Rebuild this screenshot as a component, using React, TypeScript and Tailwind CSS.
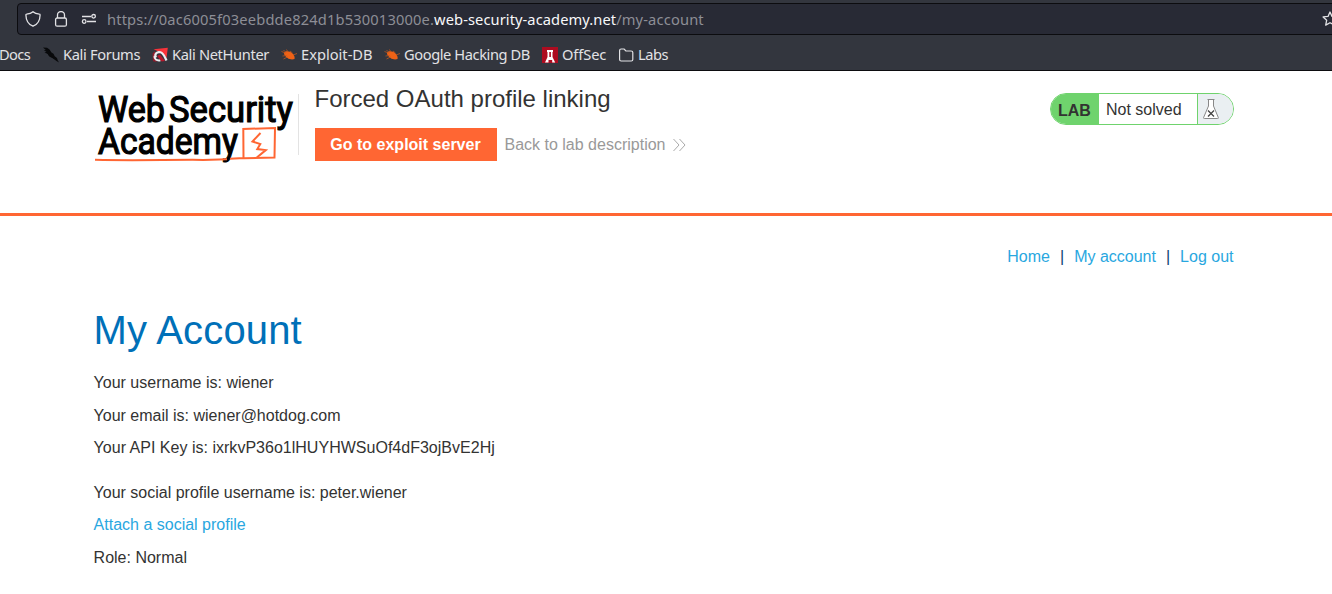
import type { ReactNode } from "react";

function KaliIcon() {
  return (
    <svg width="16" height="16" viewBox="0 0 16 16" fill="#08090b">
      <path d="M0 .5l4 .3 2.500 1.800L8.500 5.500l2 1.300 1.200 2.400 2.300 1.800.7 2.200L16 15.500l-2.500-1.500-2.800-2L8.500 10.500 6 9 4.800 6.800 1.500 5.800l2-1.100L.8 3.500l2-.6z" />
      <path d="M3 5l4 5 2 .5L7 5z" />
    </svg>
  );
}

function HunterIcon() {
  return (
    <svg width="16" height="16" viewBox="0 0 16 16">
      <path d="M1.500 2.200L15.800.8 14.500 11 9 5.500z" fill="#f8333a" />
      <path d="M.5 6.500L3 4v4l-1 3 3 4-4-.8z" fill="#8f1b2b" />
      <path d="M4 10.500C2 7 5 4.300 8.500 5.300c3 .8 4 4 6 8.200" fill="none" stroke="#ededf0" strokeWidth="2.200" />
      <path d="M2.500 9c-.5 3 2 5 6 4.300" fill="none" stroke="#ededf0" strokeWidth="2" />
      <path d="M5 9l3-1.500 5 6.500-3.500.5z" fill="#b5172b" />
    </svg>
  );
}

function BugIcon() {
  return (
    <svg width="16" height="16" viewBox="0 0 16 16">
      <path d="M3 5.500c2-2 6-1.500 8.500 1 1.800 1.500 2.500 4 2 5.500-2 .8-5 .5-7-1C4.500 9.500 2.500 7.500 3 5.500z" fill="#ef6216" />
      <path d="M.5 4.500l4 1.500M1.500 9l4-.5M2.500 12l4-2M7 5L5.500 2.500M12 8l4-1.500M2.500 3l2.500 2.500M9 4l2.500 2" fill="none" stroke="#b95520" strokeWidth=".8" />
    </svg>
  );
}

function OffSecIcon() {
  return (
    <svg width="16" height="16" viewBox="0 0 16 16">
      <path d="M0 0h16v16H0z" fill="#ad0c20" />
      <path d="M5 3h6v2h-.5v5l2.700 5.500h-3V13H6.500v2.500H3L5.500 10V5H5z" fill="#fff" />
      <path d="M7.300 5h1.600v5H7.300z" fill="#ad0c20" />
    </svg>
  );
}

function FolderIcon() {
  return (
    <svg width="16" height="16" viewBox="0 0 16 16" fill="none" stroke="#e2e2e5" strokeWidth="1.200">
      <path d="M1.600 3.500q0-1.500 1.500-1.500h3l1.800 2h5.200q1.700 0 1.700 1.500v7q0 1.500-1.500 1.500H3.100q-1.500 0-1.500-1.500z" />
    </svg>
  );
}

function Bookmark({ icon, label, width }: { icon: ReactNode; label: string; width: string }) {
  return (
    <div className={`flex h-5 shrink-0 items-center gap-1 ${width}`}>
      {icon}
      <span className="-mt-0.5 whitespace-nowrap">{label}</span>
    </div>
  );
}

function BrowserChrome() {
  return (
    <div className="h-[71px] overflow-hidden border-b border-[#0c0c0f] bg-[#33363e] font-['Noto_Sans',sans-serif] text-[14.67px] leading-5 text-[#e2e2e5]">
      <div className="flex h-[35px] pt-[3px] pl-[17px]">
        <div className="flex h-8 w-[1320px] shrink-0 items-center rounded-[4px] border border-[#0c0c0f] bg-[#282a35] pl-[7px]">
          <svg className="shrink-0" width="16" height="16" viewBox="0 0 16 16" fill="none" stroke="#e2e2e5" strokeWidth="1.300">
            <path d="M8 .8C6.500 2.200 4 3 1.600 3.200c-.5 0-.7.300-.7.700C1 9 3 13.200 8 15.200c5-2 7-6.200 7.100-11.300 0-.4-.2-.7-.7-.7C12 3 9.500 2.200 8 .8z" />
          </svg>
          <svg className="ml-3 shrink-0" width="16" height="16" viewBox="0 0 16 16" fill="none" stroke="#e2e2e5" strokeWidth="1.300">
            <rect x="2.600" y="7" width="10.800" height="8.200" rx="1.500" />
            <path d="M4.500 7V4a3.500 3.500 0 0 1 7 0v3" />
          </svg>
          <svg className="ml-3 shrink-0" width="16" height="16" viewBox="0 0 16 16" fill="none" stroke="#e2e2e5" strokeWidth="1.300">
            <path d="M1 5.500h9M6 10.500h9" />
            <circle cx="12.600" cy="5.300" r="1.800" />
            <circle cx="3.200" cy="10.500" r="1.800" />
          </svg>
          <div className="ml-[10px] w-[1215px] shrink-0 whitespace-nowrap tracking-[0.16px] text-[#8d8e96]">
            https://0ac6005f03eebdde824d1b530013000e.
            <span className="tracking-[0.08px] text-[#f8f8fa]">web-security-academy.net</span>/my-account
          </div>
          <svg className="shrink-0" width="16" height="16" viewBox="0 0 16 16" fill="none" stroke="#e2e2e5" strokeWidth="1.300" strokeLinejoin="round">
            <path d="M8 1l2 4.400 4.900.5-3.600 3.300 1 4.900L8 11.700l-4.300 2.400 1-4.900L1.100 5.900 6 5.400z" />
          </svg>
        </div>
      </div>
      <div className="flex h-9 items-center pt-1">
        <div className="-mt-0.5 w-[43px] shrink-0 -indent-px tracking-[-0.6px]">Docs</div>
        <Bookmark icon={<KaliIcon />} label="Kali Forums" width="w-[109px] tracking-[-0.35px]" />
        <Bookmark icon={<HunterIcon />} label="Kali NetHunter" width="w-[129px] tracking-[-0.35px]" />
        <Bookmark icon={<BugIcon />} label="Exploit-DB" width="w-[103px]" />
        <Bookmark icon={<BugIcon />} label="Google Hacking DB" width="w-[158px] tracking-[-0.42px]" />
        <Bookmark icon={<OffSecIcon />} label="OffSec" width="w-[76px] tracking-[-0.1px]" />
        <Bookmark icon={<FolderIcon />} label="Labs" width="w-[60px] tracking-[-0.5px]" />
      </div>
    </div>
  );
}

function Logo() {
  return (
    <svg width="204" height="80" viewBox="94 86 204 80" className="shrink-0">
      <g fill="#000" stroke="#000" strokeWidth="1.200" fontFamily="Roboto, sans-serif" fontWeight="400" fontSize="37">
        <text x="98" y="121.500" textLength="67" lengthAdjust="spacingAndGlyphs">Web</text>
        <text x="169" y="121.500" textLength="124" lengthAdjust="spacingAndGlyphs">Security</text>
        <text x="98" y="154.300" textLength="140" lengthAdjust="spacingAndGlyphs">Academy</text>
      </g>
      <g fill="none" stroke="#ff6633">
        <path d="M95 159.800c42 1 74-.2 108 .1l24-.6M230 158.800l13.500-.8-.2-29 31.700-1-.5 29.500-30.500.7" strokeWidth="2" />
        <path d="M260.500 133l-8 8.500 7.800 2.600-3 5 8.500 1-9 7.500" strokeWidth="2" />
      </g>
    </svg>
  );
}

function LabStatus() {
  return (
    <div className="mt-[22px] flex h-8 w-[184px] overflow-hidden rounded-full border border-[#6fd36d] bg-white text-base leading-[30px]">
      <div className="w-12 bg-[#6fd36d] pt-0.5 pl-[7px] font-bold">LAB</div>
      <div className="w-[98px] pt-px pl-[7px]">Not solved</div>
      <div className="grow border-l border-[#6fd36d] bg-[#eaeff2] pt-[5px] pl-[5px]">
        <svg width="16" height="20" viewBox="0 0 16 20" fill="#fff" stroke="#888" strokeWidth="1">
          <path d="M5.500.5v6.500L.6 18.500q-.3 1 .7 1h13.400q1 0 .6-1L10.500 7V.5z" />
          <path d="M4.500.5h7" />
          <path d="M5 11.500l6 6m0-6l-6 6" stroke="#444" strokeWidth="1.300" />
        </svg>
      </div>
    </div>
  );
}

export default function App() {
  return (
    <div className="h-[594px] w-[1332px] overflow-hidden bg-white font-['Liberation_Sans',Arial,sans-serif] text-base text-[#333332]">
      <BrowserChrome />
      <header className="flex h-[145px] items-start border-b-[3px] border-[#ff6633] pr-[98px] pl-[94px]">
        <div className="flex pt-[15px]">
          <Logo />
          <div className="mt-2 h-[61px] w-px bg-[#e3e3e3]" />
        </div>
        <div className="ml-4 grow pt-[10px]">
          <h1 className="-ml-[0.5px] text-2xl leading-9">Forced OAuth profile linking</h1>
          <div className="mt-[11px] flex items-center">
            <a className="flex h-[33px] w-[182px] items-center justify-center bg-[#ff6633] pr-px font-bold text-white">Go to exploit server</a>
            <a className="ml-[7.500px] flex items-center text-[#999999]">
              Back to lab description
              <svg className="ml-2" width="13" height="14" viewBox="0 0 13 14" fill="none" stroke="#aaa">
                <path d="M.5 1l5.500 6L.5 13M6.500 1l5.500 6-5.500 6" />
              </svg>
            </a>
          </div>
        </div>
        <LabStatus />
      </header>
      <main className="pr-[98.5px] pl-[93.6px]">
        <nav className="flex h-[81px] items-center justify-end gap-[10px] text-[#29a7df]">
          <a>Home</a>
          <span className="text-[#0b3d70]">|</span>
          <a>My account</a>
          <span className="text-[#0b3d70]">|</span>
          <a>Log out</a>
        </nav>
        <h2 className="mt-[9px] text-[40px] leading-[48px] tracking-[0.15px] text-[#0070b8]">My Account</h2>
        <div className="mt-4 leading-[25px]">
          <p>Your username is: wiener</p>
          <p className="mt-2">Your email is: wiener@hotdog.com</p>
          <p className="mt-[7px] tracking-[0.015px]">Your API Key is: ixrkvP36o1lHUYHWSuOf4dF3ojBvE2Hj</p>
          <p className="mt-5">Your social profile username is: peter.wiener</p>
          <a className="mt-[7px] block text-[#29a7df]">Attach a social profile</a>
          <p className="mt-2">Role: Normal</p>
        </div>
      </main>
    </div>
  );
}
